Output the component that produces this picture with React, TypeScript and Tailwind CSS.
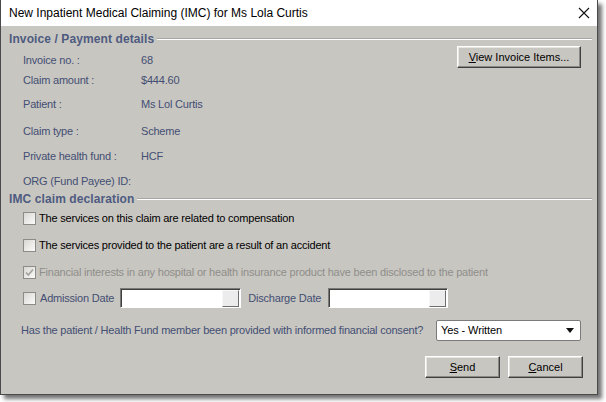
import React from 'react'

const label = 'whitespace-nowrap text-[11px] tracking-[-0.2px] text-[#434f73]'

function Groove({ title }: { title: string }) {
  return (
    <div className="flex h-[14px] items-center gap-[3px] pl-[8px] pr-[5px]">
      <span className="text-[12px] font-bold leading-none tracking-[0.1px] text-[#4e5b80]">{title}</span>
      <div className="h-0 flex-1 border-t border-b border-t-[#a8a7a2] border-b-white" />
    </div>
  )
}

function WinButton({ children, className = '' }: { children: React.ReactNode; className?: string }) {
  return (
    <button
      type="button"
      className={
        'flex h-[22px] items-center justify-center border border-t-white border-l-white border-r-[#404040] border-b-[#404040] bg-[#c8c6c1] text-[11px] text-black shadow-[inset_-1px_-1px_0_#8a8984,inset_1px_1px_0_#e6e5e1] ' +
        className
      }
    >
      {children}
    </button>
  )
}

function Check({ checked = false, disabled = false }: { checked?: boolean; disabled?: boolean }) {
  return (
    <span className="flex h-[13px] w-[13px] shrink-0 items-center justify-center border border-[#8c8b88] bg-gradient-to-br from-[#d8d7d3] to-[#fbfbfa]">
      {checked ? (
        <svg width="9" height="9" viewBox="0 0 9 9">
          <path d="M1 4.5 L3.3 7 L8 1.5" fill="none" stroke={disabled ? '#a2a19c' : '#222'} strokeWidth="1.6" />
        </svg>
      ) : null}
    </span>
  )
}

function DateBox({ width }: { width: string }) {
  return (
    <div
      className={
        'flex h-[20px] shrink-0 items-center justify-end border border-t-[#7a7975] border-l-[#7a7975] border-r-white border-b-white bg-white pr-[1px] shadow-[inset_1px_1px_0_#3f3f3f] ' +
        width
      }
    >
      <div className="h-[17px] w-[17px] border border-t-[#f7f7f7] border-l-[#f7f7f7] border-r-[#6e6e6e] border-b-[#6e6e6e] bg-[#ececec]" />
    </div>
  )
}

function InfoRow({ name, value, className = '' }: { name: string; value?: string; className?: string }) {
  return (
    <div className={'flex h-[20px] items-center pl-[22px] ' + className}>
      <span className={label + ' w-[118px]'}>{name}</span>
      {value ? <span className={label}>{value}</span> : null}
    </div>
  )
}

export default function App() {
  return (
    <div className="h-[402px] w-[606px] bg-white font-['Liberation_Sans',Arial,sans-serif]">
      <div className="flex h-[395px] w-[598px] flex-col border-x border-b border-[#4a4a4a] shadow-[4px_4px_4px_rgba(0,0,0,0.55)]">
        <div className="flex h-[26px] shrink-0 items-center justify-between bg-white pl-[8px] pr-[7px]">
          <span className="text-[12px] text-black">New Inpatient Medical Claiming (IMC) for Ms Lola Curtis</span>
          <svg width="12" height="12" viewBox="0 0 12 12">
            <path d="M1 1 L11 11 M11 1 L1 11" stroke="#111" strokeWidth="1.1" />
          </svg>
        </div>

        <div className="flex flex-1 flex-col bg-[#c8c6c1] pt-[6px]">
          <Groove title="Invoice / Payment details" />

          <div className="flex">
            <div className="flex flex-1 flex-col">
              <InfoRow name="Invoice no. :" value="68" className="mt-[4px]" />
              <InfoRow name="Claim amount :" value="$444.60" />
              <InfoRow name="Patient :" value="Ms Lol Curtis" className="mt-[4px]" />
              <InfoRow name="Claim type :" value="Scheme" className="mt-[7px]" />
              <InfoRow name="Private health fund :" value="HCF" className="mt-[5px]" />
              <InfoRow name="ORG (Fund Payee) ID:" className="mt-[5px]" />
            </div>
            <div className="pr-[16px]">
              <WinButton className="w-[124px]">
                <span>
                  <span className="underline">V</span>iew Invoice Items...
                </span>
              </WinButton>
            </div>
          </div>

          <div className="mt-[1px]">
            <Groove title="IMC claim declaration" />
          </div>

          <div className="mt-[2px] flex h-[20px] items-center gap-[3px] pl-[22px]">
            <Check />
            <span className="text-[11px] tracking-[-0.2px] text-black">The services on this claim are related to compensation</span>
          </div>
          <div className="mt-[7px] flex h-[20px] items-center gap-[3px] pl-[22px]">
            <Check />
            <span className="text-[11px] tracking-[-0.2px] text-black">
              The services provided to the patient are a result of an accident
            </span>
          </div>
          <div className="mt-[7px] flex h-[20px] items-center gap-[3px] pl-[22px]">
            <Check checked disabled />
            <span className="text-[11px] tracking-[-0.2px] text-[#8f8e8a]">
              Financial interests in any hospital or health insurance product have been disclosed to the patient
            </span>
          </div>
          <div className="mt-[6px] flex h-[20px] items-center pl-[22px]">
            <Check />
            <span className={label + ' ml-[4px] mr-[6px]'}>Admission Date</span>
            <DateBox width="w-[121px]" />
            <span className={label + ' ml-[7px] mr-[7px]'}>Discharge Date</span>
            <DateBox width="w-[120px]" />
          </div>

          <div className="mt-[11px] flex h-[22px] items-center pl-[20px] pr-[16px]">
            <span className={label + ' flex-1'}>
              Has the patient / Health Fund member been provided with informed financial consent?
            </span>
            <div className="flex h-[21px] w-[145px] items-center justify-between rounded-[2px] border border-[#7b7b7b] bg-white pl-[4px] pr-[6px]">
              <span className="text-[11px] tracking-[-0.1px] text-black">Yes - Written</span>
              <svg width="8" height="5" viewBox="0 0 8 5">
                <path d="M0 0 H8 L4 5 Z" fill="#111" />
              </svg>
            </div>
          </div>

          <div className="mt-[15px] flex justify-end gap-[8px] pr-[14px]">
            <WinButton className="w-[75px]">
              <span>
                <span className="underline">S</span>end
              </span>
            </WinButton>
            <WinButton className="w-[75px]">
              <span>
                <span className="underline">C</span>ancel
              </span>
            </WinButton>
          </div>
        </div>
      </div>
    </div>
  )
}
